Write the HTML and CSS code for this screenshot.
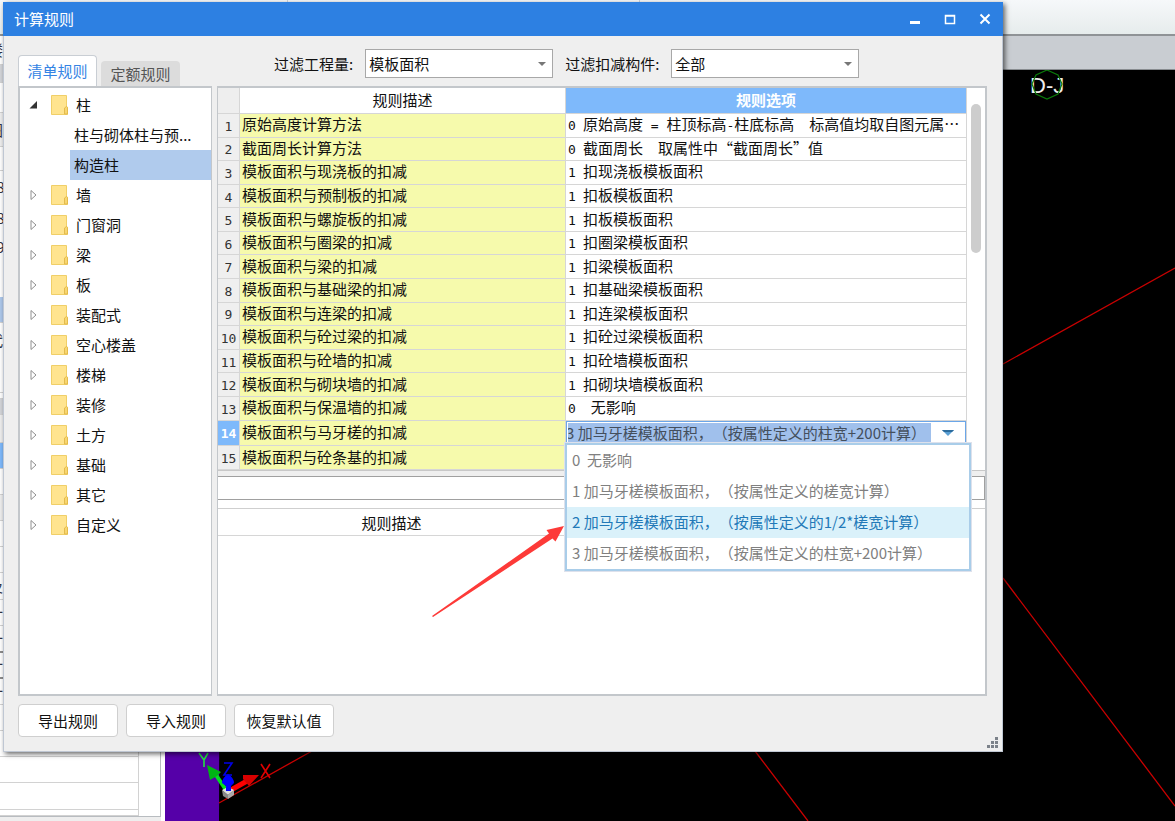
FILE: index.html
```html
<!DOCTYPE html>
<html lang="zh-CN">
<head>
<meta charset="utf-8">
<title>计算规则</title>
<link rel="stylesheet" href="styles.css">
</head>
<body>
<div class="app">
  <div class="ribbon"><i></i><i></i></div>
  <div class="workspace">
    <div class="props">
      <div class="props-list" id="props"></div>
      <div class="props-foot"></div>
    </div>
    <div class="viewport">
      <div class="viewport-tabs"></div>
      <svg class="scene" viewBox="165 70 1010 751" preserveAspectRatio="xMinYMin slice" aria-hidden="true">
        <path d="M165 70H221L219 821H165z" fill="#5500a8"/>
        <g stroke="#c80000" stroke-width="1.3" fill="none">
          <path d="M1003 364L1175 268M1003 578L1175 806M755 751L808 821M219 803L312 751"/>
        </g>
        <text x="1030" y="93" class="axis-name">D-J</text>
        <path d="M1047 70L1058 75L1062 84L1058 94L1047 99L1036 94L1032 84L1036 75z" fill="none" stroke="#0a7a0a" stroke-width="1.2"/>
        <path d="M226 790L214 772" stroke="#00e020" stroke-width="4"/>
        <path d="M207 765L221 772L217 776L210 780z" fill="#00b414"/>
        <path d="M231 790L247 781" stroke="#f00" stroke-width="5"/>
        <path d="M259 775L243 775L243 779L249 786z" fill="#d80000"/>
        <path d="M222 790L228 795V799L223 796z" fill="#888"/>
        <path d="M228 795L234 790V795L228 799z" fill="#aaa"/>
        <path d="M222 790L228 787L234 790L228 795z" fill="#ddd"/>
        <path d="M222 783Q222 778 228 774Q234 778 234 783L231 786V791H226V786z" fill="#00f"/>
        <g fill="none" stroke-width="1.6">
          <path d="M199 753L204 760L208 753M204 760V767" stroke="#20e040"/>
          <path d="M224 763H232L224 775H232" stroke="#0000e8"/>
          <path d="M261 764L270 778M270 764L261 778" stroke="#e00000"/>
        </g>
      </svg>
    </div>
  </div>

  <section class="dialog" role="dialog" aria-labelledby="dlg-title">
    <header class="titlebar">
      <h1 id="dlg-title">计算规则</h1>
      <button type="button" aria-label="最小化"><svg width="12" height="12"><path d="M1 9.500H11" stroke="#fff" stroke-width="3"/></svg></button>
      <button type="button" aria-label="最大化"><svg width="12" height="12"><path d="M1.500 2.500H10.500V10.500H1.500zM1 3H11" fill="none" stroke="#fff" stroke-width="1.500"/></svg></button>
      <button type="button" aria-label="关闭"><svg width="12" height="12"><path d="M1.500 1.500L10.500 10.500M10.500 1.500L1.500 10.500" stroke="#fff" stroke-width="2"/></svg></button>
    </header>

    <div class="toolbar">
      <div class="tabs" role="tablist">
        <button type="button" role="tab" class="tab active" aria-selected="true">清单规则</button>
        <button type="button" role="tab" class="tab" aria-selected="false">定额规则</button>
      </div>
      <div class="filters">
        <label for="f1">过滤工程量:</label>
        <span class="select"><select id="f1"><option>模板面积</option></select></span>
        <label for="f2">过滤扣减构件:</label>
        <span class="select"><select id="f2"><option>全部</option></select></span>
      </div>
    </div>

    <div class="panes">
      <ul class="tree" id="tree"></ul>
      <div class="rules">
        <div class="grid-pane">
          <table class="grid">
            <colgroup><col class="c-num"><col class="c-desc"><col></colgroup>
            <thead><tr><th></th><th>规则描述</th><th class="current">规则选项</th></tr></thead>
            <tbody id="rows"></tbody>
          </table>
          <div class="scroll"><div class="thumb"></div></div>
        </div>
        <div class="note"><input type="text" aria-label="说明" readonly></div>
        <div class="detail"><div class="detail-head">规则描述</div></div>
      </div>
    </div>

    <footer class="actions">
      <button type="button">导出规则</button>
      <button type="button">导入规则</button>
      <button type="button">恢复默认值</button>
      <svg class="grip" width="11" height="11" fill="#7c828a"><path d="M8 0h3v3h-3zM4 4h3v3h-3zM8 4h3v3h-3zM0 8h3v3h-3zM4 8h3v3h-3zM8 8h3v3h-3z"/></svg>
    </footer>
  </section>

  <svg class="pointer" width="134" height="92" viewBox="431 525 134 92" aria-hidden="true">
    <path d="M432 616L549 533.500L546.500 530L564 526L555.500 541.500L552.500 538.500L433 617z" fill="#fd3a38"/>
  </svg>
</div>
<script src="app.js"></script>
</body>
</html>
```

FILE: styles.css
```css
* { box-sizing: border-box; }
body { margin: 0; font: 15px/20px "Noto Sans CJK SC", sans-serif; color: #111; text-spacing-trim: space-all; }
button, input, select { font: inherit; color: inherit; margin: 0; padding: 0; border: 0; background: none; }
h1, ul { margin: 0; padding: 0; font: inherit; list-style: none; }

.app { position: relative; display: flex; flex-direction: column; height: 100vh; overflow: hidden; background: #fff; }
.ribbon { display: flex; flex: none; height: 36px; background: linear-gradient(#f6f8fa, #e6ecec); border-bottom: 2px solid #8f9396; }
.ribbon i { width: 288px; border-right: 1px solid #cdd2d8; }
.ribbon i + i { width: 352px; }
.workspace { display: flex; flex: 1; min-height: 0; }
.props { display: flex; flex-direction: column; flex: none; width: 165px; padding-right: 4px; }
.props-list { flex: 1; overflow: hidden; border-right: 1px solid #b8bcc0; }
.props-foot { flex: none; height: 5px; background: #eee; border-top: 1px solid #b8bcc0; }
.prop { display: flex; align-items: center; margin-right: 21px; overflow: hidden; white-space: nowrap; border-bottom: 1px solid #d2d2d2; border-right: 1px solid #d2d2d2; }
.prop span { margin-left: -12px; color: #334; }
.prop.gray { background: #d2d4d9; }
.prop.pale { background: #eee; }
.prop.sel { background: #adc8eb; }
.prop.blue { background: #7eb9fb; }
.prop.plain { border-bottom-color: transparent; }
.prop.dark { border-bottom: 2px solid #8c8c8c; }
.viewport { display: flex; flex-direction: column; flex: 1; min-width: 0; background: #000; }
.viewport-tabs { flex: none; height: 34px; background: #c9cdd2; border-bottom: 1px solid #888c90; }
.scene { flex: 1; min-height: 0; width: 100%; }
.axis-name { font: 22px "Liberation Sans", sans-serif; fill: #eee; }

.dialog { position: absolute; inset: 2px 172px 69px 3px; display: flex; flex-direction: column; background: #efefef; border: 1px solid #bfc7d3; border-top: 0; box-shadow: 2px 2px 5px rgba(0, 0, 0, .6); }
.titlebar { display: flex; align-items: center; flex: none; gap: 23px; height: 34px; margin: 0 -1px; padding: 0 12px 0 11px; background: #2d80e2; color: #fff; }
.titlebar h1 { flex: 1; }
.titlebar button { display: flex; }

.toolbar { display: flex; align-items: flex-end; flex: none; height: 50px; margin: 0 15px 0 14px; }
.tabs { display: flex; align-items: flex-end; gap: 4px; width: 256px; }
.tab { width: 79px; height: 25px; background: #dcdcdc; border-radius: 4px 4px 0 0; color: #555; }
.tab.active { height: 31px; background: #fff; border: 1px solid #c9ced4; border-bottom: 0; color: #3584e4; }
.filters { display: flex; align-items: center; align-self: flex-start; gap: 12px; padding-top: 13px; }
.select { display: grid; align-items: center; width: 188px; }
.select::after { content: ""; grid-area: 1 / 1; justify-self: end; margin-right: 7px; border: 4px solid transparent; border-top-color: #777; border-bottom: 0; pointer-events: none; }
.select select { grid-area: 1 / 1; appearance: none; width: 100%; height: 29px; padding: 0 3px; background: #fff; border: 1px solid #a8a8a8; }

.panes { display: flex; flex: 1; min-height: 0; gap: 5px; margin: 0 15px 0 14px; }
.tree { flex: none; width: 194px; padding-top: 2px; background: #fff; border: 2px solid #c3c7cb; border-right-width: 1px; }
.tree button { display: flex; align-items: center; width: 100%; height: 30px; padding-left: 9px; white-space: nowrap; text-align: left; }
.tree .arrow { flex: none; width: 10px; height: 12px; margin-right: 12px; }
.tree .folder { flex: none; width: 17px; height: 20px; margin-right: 8px; }
.tree .child { width: auto; margin-left: 50px; padding-left: 4px; }
.tree .child.selected { width: 141px; background: #b0cbed; }

.rules { display: flex; flex-direction: column; flex: 1; min-width: 0; border: 2px solid #c3c7cb; border-left-width: 1px; background: #fff; }
.grid-pane { display: flex; flex: none; height: 383px; border-bottom: 1px solid #c8c8c8; }
.grid { flex: 1; min-width: 0; height: 382px; table-layout: fixed; border-collapse: separate; border-spacing: 0; line-height: 18px; }
.c-num { width: 22px; }
.c-desc { width: 326px; }
.grid th, .grid td { padding: 0 2px 2px; border-right: 1px solid #d6d6d6; border-bottom: 1px solid #d6d6d6; font-weight: 400; white-space: nowrap; }
.grid thead th { height: 26px; }
.grid thead th:first-child { background: #eee; }
.grid thead .current { background: #7eb9fb; color: #fff; font-weight: 700; }
.grid tbody th { padding: 3px 0 0; background: #efefef; font: 13px/18px "DejaVu Sans Mono", monospace; text-align: center; color: #333; }
.grid tbody tr.current th { background: #7eb9fb; color: #fff; font-weight: 700; }
.grid td.desc { background: #f6faac; }
.grid td.option { padding-bottom: 0; }
.grid td.option div { overflow: hidden; text-overflow: ellipsis; }
.half { font: 13px/18px "DejaVu Sans Mono", monospace; white-space: pre; }
.code { display: inline-block; width: 15px; }
.grid td.editing { position: relative; padding: 0; }
.editor { display: flex; align-items: center; height: 23px; border: 1px solid #6ba6e8; background: #fff; padding: 1px; }
.editor input { width: 363px; height: 20px; background: #a0c0ec; color: #444f5c; text-indent: -2px; }
.editor button { display: flex; justify-content: center; flex: 1; }
.popup { position: absolute; z-index: 1; top: 22px; left: -1px; width: 406px; border: 2px solid #a9cde9; background: #fff; box-shadow: 0 0 0 1px #dde1ec; }
.popup button { display: block; width: 100%; height: 31px; padding-left: 5px; color: #808080; text-align: left; white-space: pre; }
.popup button.hover { background: #daf1fa; color: #2279b8; }
.scroll { flex: none; width: 18px; padding: 16px 4px; }
.thumb { width: 10px; height: 149px; border-radius: 5px; background: #cdcdcd; }
.note { padding-top: 5px; background: linear-gradient(#efefef 5px, #fff 5px); margin-bottom: 8px; }
.note input { display: block; width: 100%; height: 24px; border: 1px solid #a0a0a0; border-left: 0; background: #fff; }
.detail { flex: 1; border-top: 1px solid #cfcfcf; }
.detail-head { width: 348px; height: 27px; padding-top: 4px; border-bottom: 1px solid #d6d6d6; border-right: 1px solid #d6d6d6; text-align: center; }

.actions { display: flex; flex: none; gap: 8px; height: 55px; padding: 8px 4px 0 14px; }
.actions button { width: 100px; height: 33px; background: #fff; border: 1px solid #cfcfcf; border-radius: 4px; }
.grip { align-self: flex-end; margin: 0 0 3px auto; }

.pointer { position: absolute; left: 431px; top: 525px; }
```

FILE: app.js
```js
const html = (id, text) => { document.getElementById(id).innerHTML = text; };

const folder = '<svg class="folder" viewBox="0 0 17 20"><path d="M.5.5H15.500V12H16.500V19.500H.5z" fill="#ffe48f" stroke="#f0cf68"/><path d="M13.500 19V13L15.500 11.500L16.500 12.500V19z" fill="#f8d670" stroke="#e3bb4d"/></svg>';
const closed = '<svg class="arrow" viewBox="0 0 10 12"><path d="M2 1.500V10.500L7 6z" fill="#fff" stroke="#909090"/></svg>';
const open = '<svg class="arrow" viewBox="0 0 10 12"><path d="M8 2V9.500H.5z" fill="#333"/></svg>';
const node = (name, arrow) => `<li><button type="button">${arrow}${folder}${name}</button></li>`;

html('tree', node('柱', open)
  + '<li><button type="button" class="child">柱与砌体柱与预...</button></li>'
  + '<li><button type="button" class="child selected">构造柱</button></li>'
  + ['墙', '门窗洞', '梁', '板', '装配式', '空心楼盖', '楼梯', '装修', '土方', '基础', '其它', '自定义'].map(n => node(n, closed)).join(''));

const rules = [
  ['原始高度计算方法', '0', '原始高度<span class="half"> = </span>柱顶标高<span class="half">-</span>柱底标高　标高值均取自图元属⋯'],
  ['截面周长计算方法', '0', '截面周长　取属性中“截面周长”值'],
  ['模板面积与现浇板的扣减', '1', '扣现浇板模板面积'],
  ['模板面积与预制板的扣减', '1', '扣板模板面积'],
  ['模板面积与螺旋板的扣减', '1', '扣板模板面积'],
  ['模板面积与圈梁的扣减', '1', '扣圈梁模板面积'],
  ['模板面积与梁的扣减', '1', '扣梁模板面积'],
  ['模板面积与基础梁的扣减', '1', '扣基础梁模板面积'],
  ['模板面积与连梁的扣减', '1', '扣连梁模板面积'],
  ['模板面积与砼过梁的扣减', '1', '扣砼过梁模板面积'],
  ['模板面积与砼墙的扣减', '1', '扣砼墙模板面积'],
  ['模板面积与砌块墙的扣减', '1', '扣砌块墙模板面积'],
  ['模板面积与保温墙的扣减', '0', '<span class="half"> </span>无影响'],
  ['模板面积与马牙槎的扣减'],
  ['模板面积与砼条基的扣减', '', '']
];
const choices = ['0  无影响', '1 加马牙槎模板面积，（按属性定义的槎宽计算）', '2 加马牙槎模板面积，（按属性定义的1/2*槎宽计算）', '3 加马牙槎模板面积，（按属性定义的柱宽+200计算）'];
const editing = `<td class="editing"><div class="editor"><input type="text" aria-label="规则选项" value="${choices[3]}"><button type="button" aria-label="展开"><svg width="12" height="6"><path d="M0 0H12L6 6z" fill="#5a9fd4"/><path d="M0 0H12L10 2H2z" fill="#2c6b9c"/></svg></button></div>`
  + `<div class="popup">${choices.map((c, i) => `<button type="button"${i === 2 ? ' class="hover"' : ''}>${c}</button>`).join('')}</div></td>`;

html('rows', rules.map(([name, code, text], i) =>
  `<tr${code === undefined ? ' class="current"' : ''}><th>${i + 1}</th><td class="desc">${name}</td>`
  + (code === undefined ? editing : `<td class="option"><div><span class="half code">${code}</span>${text}</div></td>`) + '</tr>').join(''));

const props = [
  [29, '', '楼'], [18, 'gray'], [30, ''], [34, 'pale', '图'], [24, ''], [33, 'plain', '68'], [29, 'plain', '68'], [29, 'plain', '69'], [35, 'plain', ''],
  [26, 'sel', '：'], [34, 'plain', '代'], [36, ''], [6, ''], [16, 'gray'], [28, 'pale'], [26, 'blue'], [26, ''], [26, 'pale'], [26, ''], [26, ''],
  [27, '', '及'], [26, '', '计'], [27, 'dark', '计'], [26, 'dark', '计'], [26, '', '计'], [26, ''], [26, ''], [26, ''], [27, ''], [6, '']
];
html('props', props.map(([height, kind, text = '']) => `<div class="prop ${kind}" style="height:${height}px"><span>${text}</span></div>`).join(''));
```
